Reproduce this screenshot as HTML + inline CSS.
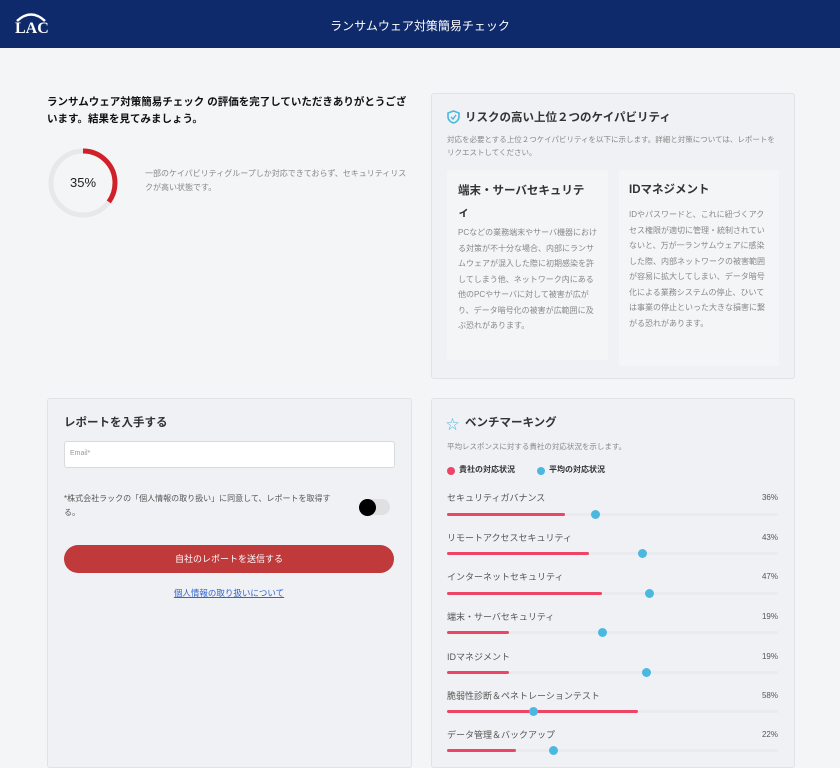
<!DOCTYPE html>
<html><head><meta charset="utf-8"><style>
*{margin:0;padding:0;box-sizing:border-box}
body{width:840px;height:756px;overflow:hidden;background:#f4f5f7;font-family:"Liberation Sans","Noto Sans CJK JP",sans-serif;color:#222;position:relative}
.abs{position:absolute}
.hdr{left:0;top:0;width:840px;height:48px;background:#0f2a6b}
.card{background:#f0f1f4;border:1px solid #e0e2e6;border-radius:3px}
.inner{background:#f4f5f7;border-radius:2px}
.t8{font-size:8px;color:#888;line-height:15.5px}
.h{font-size:12px;font-weight:bold;color:#333}
.bar{height:3px;background:#ee4466;border-radius:2px}
.track{height:3px;background:#eaebee;left:447px;width:331px}
.dot{width:9px;height:9px;border-radius:50%;background:#4bb8e0}
.lbl{font-size:9px;color:#555;left:447px}
.pct{font-size:8px;color:#555;right:62px}
</style></head><body>
<div class="abs hdr"></div>
<div class="abs" style="left:14px;top:10px;width:34px;height:28px;color:#fff;font-family:'Liberation Serif',serif;font-weight:bold;font-size:16px;">
<svg width="34" height="12" style="position:absolute;left:0;top:0"><path d="M3 11 Q17 -2 31 11" stroke="#fff" stroke-width="2.5" fill="none"/></svg>
<span style="position:absolute;left:1px;top:10px">LAC</span></div>
<div class="abs" style="left:0;width:840px;top:17px;text-align:center;color:#fff;font-size:12px">ランサムウェア対策簡易チェック</div>

<div class="abs" style="left:47px;top:94px;width:366px;font-size:10.5px;font-weight:bold;line-height:17px;color:#111">ランサムウェア対策簡易チェック の評価を完了していただきありがとうございます。結果を見てみましょう。</div>
<svg class="abs" style="left:47px;top:147px" width="72" height="72"><circle cx="36" cy="36" r="32" stroke="#e8e8ea" stroke-width="5" fill="none"/><circle cx="36" cy="36" r="32" stroke="#d0202a" stroke-width="5" fill="none" stroke-dasharray="70.4 201" transform="rotate(-90 36 36)"/></svg>
<div class="abs" style="left:47px;top:175px;width:72px;text-align:center;font-size:13px;color:#222">35%</div>
<div class="abs t8" style="left:145px;top:167px;width:265px;line-height:14px">一部のケイパビリティグループしか対応できておらず、セキュリティリスクが高い状態です。</div>

<div class="abs card" style="left:431px;top:93px;width:364px;height:286px"></div>
<svg class="abs" style="left:447px;top:110px" width="13" height="14" viewBox="0 0 13 14"><path d="M6.5 1 L12 3 V7 C12 10 9 12.5 6.5 13 C4 12.5 1 10 1 7 V3 Z" fill="none" stroke="#4bb8e0" stroke-width="1.6"/><path d="M4 7 L6 9 L9 5" fill="none" stroke="#4bb8e0" stroke-width="1.4"/></svg>
<div class="abs h" style="left:465px;top:109px;font-size:11.5px">リスクの高い上位２つのケイパビリティ</div>
<div class="abs t8" style="left:447px;top:133px;width:335px;line-height:13px;font-size:7.5px">対応を必要とする上位２つケイパビリティを以下に示します。詳細と対策については、レポートをリクエストしてください。</div>
<div class="abs inner" style="left:447px;top:170px;width:161px;height:190px"></div>
<div class="abs inner" style="left:619px;top:170px;width:160px;height:196px"></div>
<div class="abs h" style="left:458px;top:180px;width:136px;line-height:22px;font-size:11.5px">端末・サーバセキュリティ</div>
<div class="abs t8" style="left:458px;top:225px;width:140px">PCなどの業務端末やサーバ機器における対策が不十分な場合、内部にランサムウェアが混入した際に初期感染を許してしまう他、ネットワーク内にある他のPCやサーバに対して被害が広がり、データ暗号化の被害が広範囲に及ぶ恐れがあります。</div>
<div class="abs h" style="left:629px;top:181px;font-size:11.5px">IDマネジメント</div>
<div class="abs t8" style="left:629px;top:207px;width:140px">IDやパスワードと、これに紐づくアクセス権限が適切に管理・統制されていないと、万が一ランサムウェアに感染した際、内部ネットワークの被害範囲が容易に拡大してしまい、データ暗号化による業務システムの停止、ひいては事業の停止といった大きな損害に繋がる恐れがあります。</div>

<div class="abs card" style="left:47px;top:398px;width:365px;height:370px"></div>
<div class="abs h" style="left:64px;top:414px;font-size:11.5px">レポートを入手する</div>
<div class="abs" style="left:64px;top:441px;width:331px;height:27px;background:#fff;border:1.5px solid #d8dade;border-radius:3px;font-size:7px;color:#999;padding:8px 5px">Email*</div>
<div class="abs t8" style="left:64px;top:492px;width:280px;line-height:14px;color:#555">*株式会社ラックの「個人情報の取り扱い」に同意して、レポートを取得する。</div>
<div class="abs" style="left:364px;top:499px;width:26px;height:16px;border-radius:8px;background:#e0e0e2"></div>
<div class="abs" style="left:359px;top:499px;width:17px;height:17px;border-radius:50%;background:#000"></div>
<div class="abs" style="left:64px;top:545px;width:330px;height:28px;border-radius:14px;background:#c0393b;color:#fff;font-size:9px;text-align:center;line-height:28px">自社のレポートを送信する</div>
<div class="abs" style="left:64px;top:587px;width:330px;text-align:center;font-size:8.5px;color:#3366cc;text-decoration:underline">個人情報の取り扱いについて</div>

<div class="abs card" style="left:431px;top:398px;width:364px;height:370px"></div>
<div class="abs" style="left:446px;top:414px;color:#4bb8e0;font-size:13px">☆</div>
<div class="abs h" style="left:465px;top:414px;font-size:11.5px">ベンチマーキング</div>
<div class="abs t8" style="left:447px;top:439px;font-size:7.5px">平均レスポンスに対する貴社の対応状況を示します。</div>
<div class="abs" style="left:447px;top:467px;width:8px;height:8px;border-radius:50%;background:#ee4466"></div>
<div class="abs" style="left:459px;top:464px;font-size:8px;font-weight:bold;color:#333">貴社の対応状況</div>
<div class="abs" style="left:537px;top:467px;width:8px;height:8px;border-radius:50%;background:#4bb8e0"></div>
<div class="abs" style="left:549px;top:464px;font-size:8px;font-weight:bold;color:#333">平均の対応状況</div>

<div class="abs lbl" style="top:491px">セキュリティガバナンス</div><div class="abs pct" style="top:493px">36%</div>
<div class="abs track" style="top:513px"></div><div class="abs bar" style="left:447px;top:513px;width:118px"></div><div class="abs dot" style="left:591px;top:510px"></div>
<div class="abs lbl" style="top:531px">リモートアクセスセキュリティ</div><div class="abs pct" style="top:533px">43%</div>
<div class="abs track" style="top:552px"></div><div class="abs bar" style="left:447px;top:552px;width:142px"></div><div class="abs dot" style="left:638px;top:549px"></div>
<div class="abs lbl" style="top:570px">インターネットセキュリティ</div><div class="abs pct" style="top:572px">47%</div>
<div class="abs track" style="top:592px"></div><div class="abs bar" style="left:447px;top:592px;width:155px"></div><div class="abs dot" style="left:645px;top:589px"></div>
<div class="abs lbl" style="top:610px">端末・サーバセキュリティ</div><div class="abs pct" style="top:612px">19%</div>
<div class="abs track" style="top:631px"></div><div class="abs bar" style="left:447px;top:631px;width:62px"></div><div class="abs dot" style="left:598px;top:628px"></div>
<div class="abs lbl" style="top:650px">IDマネジメント</div><div class="abs pct" style="top:652px">19%</div>
<div class="abs track" style="top:671px"></div><div class="abs bar" style="left:447px;top:671px;width:62px"></div><div class="abs dot" style="left:642px;top:668px"></div>
<div class="abs lbl" style="top:689px">脆弱性診断＆ペネトレーションテスト</div><div class="abs pct" style="top:691px">58%</div>
<div class="abs track" style="top:710px"></div><div class="abs bar" style="left:447px;top:710px;width:191px"></div><div class="abs dot" style="left:529px;top:707px"></div>
<div class="abs lbl" style="top:728px">データ管理＆バックアップ</div><div class="abs pct" style="top:730px">22%</div>
<div class="abs track" style="top:749px"></div><div class="abs bar" style="left:447px;top:749px;width:69px"></div><div class="abs dot" style="left:549px;top:746px"></div>
</body></html>
